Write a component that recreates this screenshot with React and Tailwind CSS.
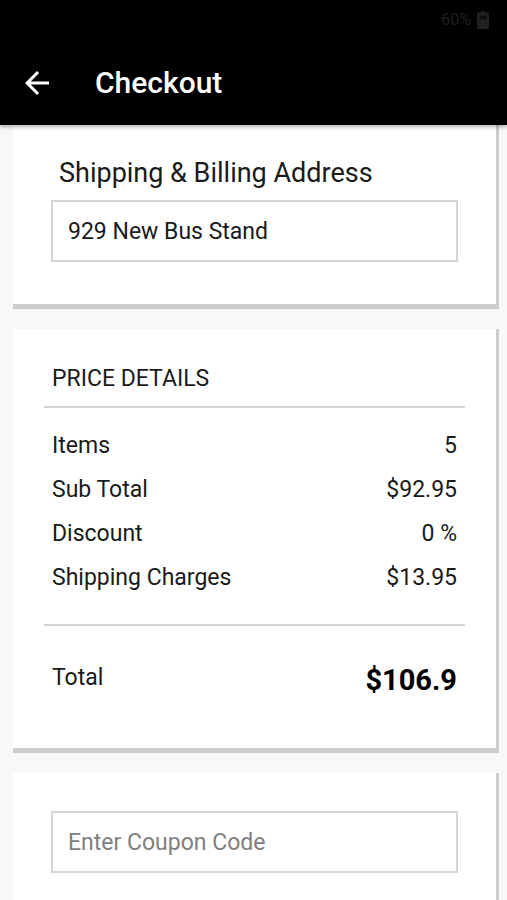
import React, { useState } from 'react';

const priceRows = [
  { label: 'Items', value: '5' },
  { label: 'Sub Total', value: '$92.95' },
  { label: 'Discount', value: '0 %' },
  { label: 'Shipping Charges', value: '$13.95' },
];

const BackIcon = () => (
  <svg viewBox="0 0 24 24" className="w-9 h-9" fill="currentColor" aria-hidden="true">
    <path d="M20 11H7.83l5.59-5.59L12 4l-8 8 8 8 1.41-1.41L7.83 13H20v-2z" />
  </svg>
);

const BatteryIcon = () => (
  <svg viewBox="0 0 12 18" className="w-3 h-[18px]" aria-hidden="true">
    <path d="M4 0h4v1.5h3a1 1 0 0 1 1 1V17a1 1 0 0 1-1 1H1a1 1 0 0 1-1-1V2.500a1 1 0 0 1 1-1h3z" fill="#222222" />
    <path d="M2.500 4.500h7v4h-7z" fill="#0c0c0c" />
  </svg>
);

const Header = () => (
  <header className="relative z-10 shrink-0 bg-black text-white shadow-[0_2px_4px_rgba(0,0,0,0.3)]">
    <div className="flex h-10 items-center justify-end gap-1.5 pr-[18px] text-base text-[#1f1f1f]">
      <span>60%</span>
      <BatteryIcon />
    </div>
    <div className="flex h-[85px] items-center gap-10 px-5">
      <button type="button" aria-label="Back" className="-ml-px">
        <BackIcon />
      </button>
      <h1 className="text-[30px] leading-9 font-medium">Checkout</h1>
    </div>
  </header>
);

const App = () => {
  const [address, setAddress] = useState('929 New Bus Stand');
  const [coupon, setCoupon] = useState('');

  return (
    <div className="flex h-screen flex-col overflow-hidden bg-[#f8f8f8] font-[Roboto,sans-serif] text-[23px] leading-7 text-[#1a1a1a]">
      <Header />

      <main className="flex flex-1 flex-col gap-5 pl-[13px] pr-2">
        <section className="shrink-0 border-r-3 border-b-5 border-[#cdcdcd] bg-white px-[38px] pt-8 pb-[42px]">
          <label htmlFor="address" className="block px-2 pb-[11px] text-[27px] leading-8">
            Shipping &amp; Billing Address
          </label>
          <input
            id="address"
            type="text"
            value={address}
            onChange={(e) => setAddress(e.target.value)}
            className="block h-[62px] w-full border-2 border-[#d6d6d6] bg-white px-[15px] outline-none"
          />
        </section>

        <section className="shrink-0 border-r-3 border-b-5 border-[#cdcdcd] bg-white px-[31px] pt-9 pb-[50px]">
          <h2 className="border-b-2 border-[#d3d3d3] px-2 pb-[13px]">PRICE DETAILS</h2>
          <table className="w-full">
            <tbody className="before:block before:h-4 after:block after:h-6">
              {priceRows.map((row) => (
                <tr key={row.label} className="h-11">
                  <th scope="row" className="pl-2 text-left font-normal">{row.label}</th>
                  <td className="pr-2 text-right">{row.value}</td>
                </tr>
              ))}
            </tbody>
            <tfoot className="border-t-2 border-[#d3d3d3]">
              <tr>
                <th scope="row" className="pt-9 pb-1 pl-2 text-left font-normal">Total</th>
                <td className="pt-9 pr-2 text-right text-[29px] leading-9 font-bold text-black">$106.9</td>
              </tr>
            </tfoot>
          </table>
        </section>

        <section className="flex-1 border-r-3 border-[#cdcdcd] bg-white px-[38px] pt-[38px]">
          <input
            type="text"
            aria-label="Coupon code"
            placeholder="Enter Coupon Code"
            value={coupon}
            onChange={(e) => setCoupon(e.target.value)}
            className="block h-[62px] w-full border-2 border-[#d6d6d6] bg-white px-[15px] outline-none placeholder:text-[#808080]"
          />
        </section>
      </main>
    </div>
  );
};

export default App;
